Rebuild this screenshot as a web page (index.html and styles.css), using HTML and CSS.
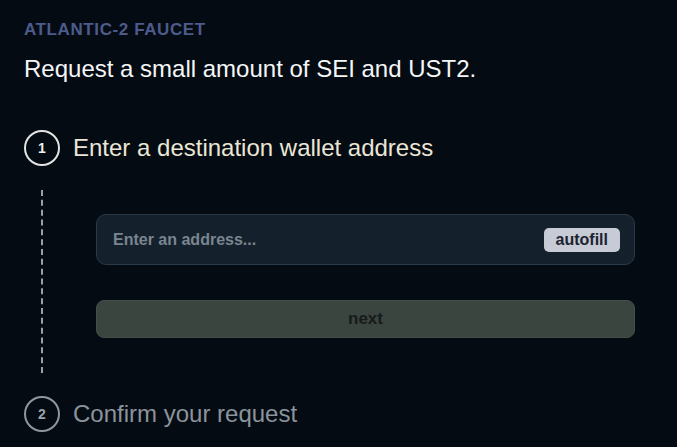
FILE: index.html
```html
<!DOCTYPE html>
<html>
<head>
    <title>Atlantic-2 Faucet</title>
    <link rel="stylesheet" href="styles.css">
</head>
<body>
    <div class="header">
        <div class="label">ATLANTIC-2 FAUCET</div>
        <p class="lead">Request a small amount of SEI and UST2.</p>
    </div>

    <div class="step">
        <div class="num">1</div>
        <div class="step-title">Enter a destination wallet address</div>
    </div>

    <div class="step-body">
        <div class="rail"></div>
        <div class="form">
            <div class="address">
                <span class="placeholder">Enter an address...</span>
                <button class="autofill">autofill</button>
            </div>
            <button class="next">next</button>
        </div>
    </div>

    <div class="step muted">
        <div class="num">2</div>
        <div class="step-title">Confirm your request</div>
    </div>
</body>
</html>
```
FILE: styles.css
```css
body {
    font-family: "Liberation Sans", Arial, sans-serif;
    margin: 0;
    padding: 20px 24px 0 24px;
    background-color: #050b12;
    color: #ffffff;
    height: 447px;
    box-sizing: border-box;
    overflow: hidden;
}
.label {
    font-size: 17px;
    line-height: 20px;
    font-weight: bold;
    color: #4d5b8c;
    letter-spacing: 0.6px;
}
.lead {
    font-size: 24px;
    line-height: 28px;
    margin: 15px 0 0 0;
    color: #f4f6f8;
}
.step {
    display: flex;
    align-items: center;
    gap: 13px;
    margin-top: 47px;
}
.num {
    width: 32px;
    height: 32px;
    border: 2px solid #e2e4e4;
    border-radius: 50%;
    display: flex;
    align-items: center;
    justify-content: center;
    font-size: 14px;
    font-weight: bold;
    color: #f0f0f0;
}
.step-title {
    font-size: 24px;
    color: #ebe6d6;
}
.step-body {
    display: flex;
    padding-top: 24px;
}
.rail {
    width: 0;
    margin-left: 17px;
    border-left: 2px dashed #9aa0a6;
    height: 183px;
}
.form {
    flex: 1;
    margin-left: 53px;
    margin-right: 18px;
    padding-top: 24px;
}
.address {
    display: flex;
    align-items: center;
    justify-content: space-between;
    height: 49px;
    padding: 0 14px 0 16px;
    background: #14212d;
    border: 1px solid #2b3a48;
    border-radius: 10px;
}
.placeholder {
    font-size: 16px;
    font-weight: bold;
    color: #7a858f;
}
.autofill {
    font-family: "Liberation Sans", Arial, sans-serif;
    font-size: 16px;
    font-weight: bold;
    color: #1c2230;
    background: #c7cbd6;
    border: none;
    border-radius: 5px;
    padding: 3px 12px 3px 12px;
}
.next {
    display: block;
    width: 100%;
    height: 38px;
    margin-top: 35px;
    font-family: "Liberation Sans", Arial, sans-serif;
    font-size: 17px;
    font-weight: bold;
    color: #161b1a;
    background: #3b4540;
    border: 1px solid #444f4a;
    border-radius: 8px;
}
.step.muted {
    margin-top: 23px;
}
.muted .num {
    border-color: #8f979e;
    color: #9aa2a8;
}
.muted .step-title {
    color: #8a949c;
}
```
